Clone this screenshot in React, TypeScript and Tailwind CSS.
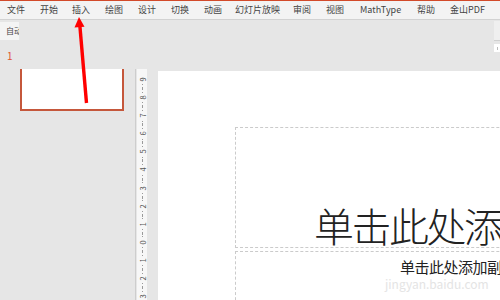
import React from "react";

const tabs: { label: string; cls: string }[] = [
  { label: "文件", cls: "w-[33px]" },
  { label: "开始", cls: "w-[32px]" },
  { label: "插入", cls: "w-[33px]" },
  { label: "绘图", cls: "w-[33px]" },
  { label: "设计", cls: "w-[33px]" },
  { label: "切换", cls: "w-[33px]" },
  { label: "动画", cls: "w-[31px]" },
  { label: "幻灯片放映", cls: "w-[58px]" },
  { label: "审阅", cls: "w-[33px]" },
  { label: "视图", cls: "w-[34px]" },
  { label: "MathType", cls: "w-[57px]" },
  { label: "帮助", cls: "w-[33px]" },
  { label: "金山PDF", cls: "w-[45px]" },
];

const rulerNums = ["9", "8", "7", "6", "5", "4", "3", "2", "1", "0", "1", "2", "3"];

function Ruler() {
  return (
    <div className="w-[10px] shrink-0 bg-[#f7f7f7] flex flex-col items-center pt-[7px]">
      {rulerNums.map((n, i) => (
        <div key={i} className="h-[18.1px] w-full flex flex-col items-center shrink-0">
          <div className="h-[7px] flex items-center justify-center">
            <span className="-rotate-90 text-[7.5px] leading-[7px] text-[#555]">{n}</span>
          </div>
          <div className="h-[3.7px] flex items-center">
            <div className="w-[1px] h-[1px] bg-[#9a9a9a]" />
          </div>
          <div className="h-[3.7px] flex items-center">
            <div className="w-[1px] h-[3px] bg-[#9a9a9a]" />
          </div>
          <div className="h-[3.7px] flex items-center">
            <div className="w-[1px] h-[1px] bg-[#9a9a9a]" />
          </div>
        </div>
      ))}
    </div>
  );
}

export default function App() {
  return (
    <div
      className="relative w-[500px] h-[300px] overflow-hidden bg-[#e6e6e6] flex flex-col"
      style={{ fontFamily: '"Noto Sans CJK SC", "Noto Sans", sans-serif' }}
    >
      <div className="h-[1px] bg-[#d24a2a] shrink-0" />
      <div className="h-[19px] shrink-0 bg-[#f3f3f3] border-b border-[#d2d2d2] flex items-center pl-[7px] text-[9px] text-[#444]">
        {tabs.map((t) => (
          <div key={t.label} className={`${t.cls} shrink-0 whitespace-nowrap leading-[12px]`}>
            {t.label}
          </div>
        ))}
      </div>
      <div className="flex-1 flex flex-row min-h-0">
        {/* left thumbnails */}
        <div className="w-[135px] shrink-0 flex flex-col">
          <div className="mt-[2px] w-[19px] h-[18px] bg-[#f4f4f4] overflow-hidden whitespace-nowrap text-[8px] leading-[18px] pl-[6px] text-[#444]">
            自动
          </div>
          <div className="mt-[10px] pl-[7px] text-[10px] leading-[12px] text-[#e0552f]">1</div>
          <div className="mt-[7px] ml-[20px] w-[104px] h-[42px] bg-white border-l-[2px] border-r-[2px] border-b-[2px] border-[#c5573b]" />
        </div>
        {/* editor */}
        <div className="flex-1 flex flex-col min-w-0">
          <div className="h-[49px] shrink-0 flex justify-end">
            <div className="w-[6px] flex flex-col">
              <div className="mt-[1px] h-[20px] bg-[#efefef] border-b border-[#cfcfcf]" />
              <div className="mt-[3px] h-[8px] bg-white flex items-center justify-center">
                <div className="w-[1px] h-[3px] bg-[#bbb]" />
              </div>
            </div>
          </div>
          <div className="flex-1 flex flex-row border-l border-[#cdcdcd] min-h-0">
            <div className="w-[1px] shrink-0" />
            <Ruler />
            <div className="w-[11px] shrink-0" />
            <div className="flex-1 bg-white mt-[2px] flex flex-col overflow-hidden">
              <div className="mt-[56px] ml-[77px] h-[121px] w-[400px] shrink-0 border border-dashed border-[#cbcbcb] flex items-end pb-[2px] pl-[78px]">
                <span className="text-[40px] leading-[40px] font-light tracking-[-2.5px] text-[#222] whitespace-nowrap">
                  单击此处添加标题
                </span>
              </div>
              <div className="mt-[3px] ml-[77px] h-[80px] w-[400px] shrink-0 border border-dashed border-[#cbcbcb] pl-[164px] pt-[2px]">
                <span className="text-[15px] leading-[16px] tracking-[-0.5px] text-[#222] whitespace-nowrap">
                  单击此处添加副标题
                </span>
              </div>
            </div>
          </div>
        </div>
      </div>

      {/* watermark */}
      <div className="absolute left-[385px] top-[278px] text-[12px] leading-[12px] text-[#e4e4e4] whitespace-nowrap">
        jingyan.baidu.com
      </div>

      {/* red arrow */}
      <svg className="absolute left-0 top-0" width="500" height="300" viewBox="0 0 500 300">
        <line x1="86.5" y1="103" x2="79.8" y2="25" stroke="#ff0000" strokeWidth="3.4" />
        <polygon points="79,17 74.5,27.5 84.5,26.8" fill="#ff0000" />
      </svg>
    </div>
  );
}
